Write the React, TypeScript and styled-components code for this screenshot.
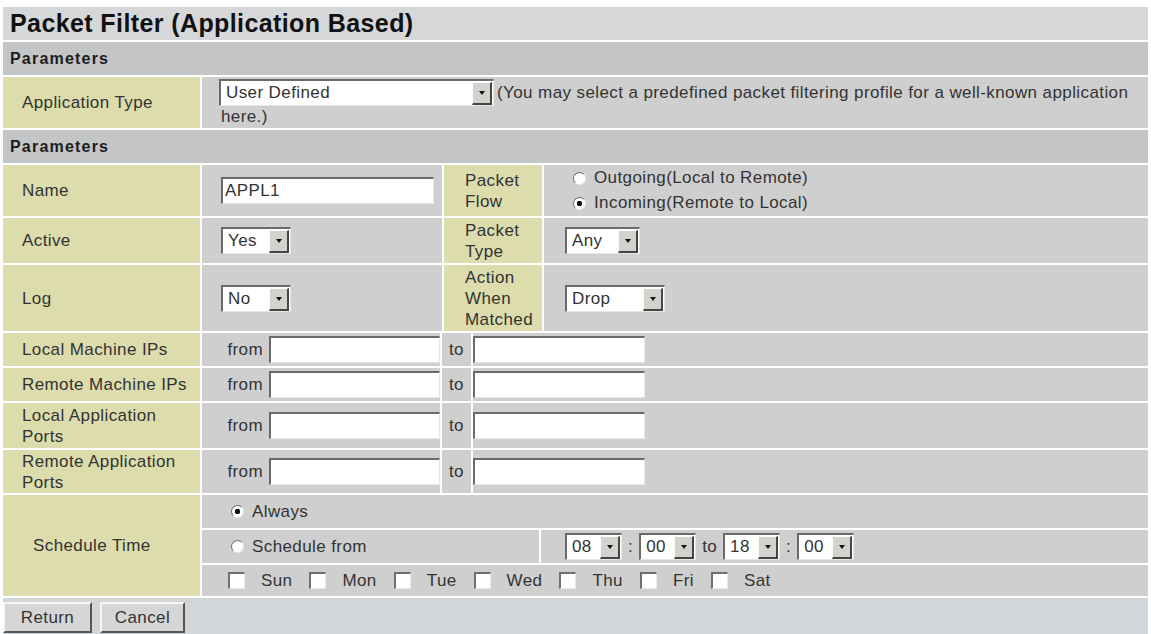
import styled, { createGlobalStyle } from "styled-components";

const GlobalStyle = createGlobalStyle`
    body {
        margin: 0;
        background: #ffffff;
        font-family: "Liberation Sans", Arial, sans-serif;
        color: #333333;
    }
`;

const Page = styled.div`
    width: 1145px;
    padding: 7px 0 0 3px;
    display: flex;
    flex-direction: column;
    gap: 2px;
    font-size: 17px;
    letter-spacing: 0.4px;
`;

const Title = styled.h1`
    margin: 0;
    height: 33px;
    padding-left: 7px;
    display: flex;
    align-items: center;
    background: #d5d7d9;
    font-size: 25px;
    font-weight: bold;
    color: #111;
`;

const Section = styled.div`
    height: 33px;
    padding-left: 7px;
    display: flex;
    align-items: center;
    background: #c3c5c7;
    font-size: 16px;
    font-weight: bold;
    letter-spacing: 1.2px;
    color: #1c1c1c;
`;

// every block of rows is one grid, the white gaps are the cell borders
const Block = styled.div<{ $cols: string; $rows: string }>`
    display: grid;
    grid-template-columns: ${p => p.$cols};
    grid-template-rows: ${p => p.$rows};
    gap: 2px;
`;

const Label = styled.div<{ $pad?: number; $span?: number }>`
    background: #dcdcad;
    padding-left: ${p => p.$pad ?? 19}px;
    display: flex;
    align-items: center;
    line-height: 21px;
    ${p => p.$span ? `grid-row: span ${p.$span};` : ""}
`;

const Cell = styled.div<{ $pad?: number; $justify?: string; $wide?: number }>`
    background: #cfcfcf;
    padding-left: ${p => p.$pad ?? 19}px;
    display: flex;
    align-items: center;
    justify-content: ${p => p.$justify ?? "flex-start"};
    gap: 6px;
    ${p => p.$wide ? `grid-column: span ${p.$wide};` : ""}
`;

const WrapCell = styled.div`
    background: #cfcfcf;
    padding: 2px 10px 0 17px;
    display: flex;
    flex-wrap: wrap;
    align-items: center;
    align-content: flex-start;
    line-height: 22px;
`;

const Hint = styled.span`
    margin-left: 3px;
`;

const HintTail = styled.span`
    flex-basis: 100%;
    padding-left: 2px;
`;

const Stack = styled.div`
    display: flex;
    flex-direction: column;
    gap: 5px;
`;

const Choice = styled.label`
    display: flex;
    align-items: center;
    gap: 8px;
`;

const Radio = styled.span<{ $on?: boolean }>`
    width: 11px;
    height: 11px;
    border-radius: 50%;
    border: 1px solid;
    border-color: #6f6f6f #e8e8e8 #e8e8e8 #6f6f6f;
    background: ${p => p.$on
        ? "radial-gradient(circle, #111 0 2.5px, #fff 3px)"
        : "#fff"};
    flex-shrink: 0;
`;

const Check = styled.span`
    width: 14px;
    height: 14px;
    background: #fff;
    border-top: 2px solid #6f6f6f;
    border-left: 2px solid #6f6f6f;
    border-right: 1px solid #e8e8e8;
    border-bottom: 1px solid #e8e8e8;
    flex-shrink: 0;
`;

const Days = styled.div`
    display: flex;
    align-items: center;
    gap: 17px;
`;

const Day = styled.label`
    display: flex;
    align-items: center;
    gap: 16px;
`;

const Field = styled.div<{ $w: number }>`
    width: ${p => p.$w}px;
    height: 27px;
    box-sizing: border-box;
    background: #fff;
    border-top: 2px solid #6a6a6a;
    border-left: 2px solid #6a6a6a;
    border-right: 1px solid #e6e6e6;
    border-bottom: 1px solid #e6e6e6;
    padding-left: 2px;
    display: flex;
    align-items: center;
`;

const SelectBox = styled.span<{ $w: number }>`
    display: inline-flex;
    width: ${p => p.$w}px;
    height: 27px;
    box-sizing: border-box;
    background: #fff;
    border-top: 2px solid #6a6a6a;
    border-left: 2px solid #6a6a6a;
    border-right: 1px solid #e6e6e6;
    border-bottom: 1px solid #e6e6e6;
    line-height: normal;
    flex-shrink: 0;
`;

const SelectText = styled.span`
    flex: 1;
    padding-left: 5px;
    display: flex;
    align-items: center;
`;

const SelectBtn = styled.span`
    width: 17px;
    margin: 1px 1px 0 0;
    background: #d4d2cc;
    border-style: solid;
    border-width: 1px 2px 2px 1px;
    border-color: #fafafa #454545 #454545 #fafafa;
    display: flex;
    align-items: center;
    justify-content: center;
    &::after {
        content: "";
        border-left: 3px solid transparent;
        border-right: 3px solid transparent;
        border-top: 4px solid #111;
    }
`;

const Bar = styled.div`
    height: 36px;
    padding-top: 4px;
    box-sizing: border-box;
    background: #d3d6d8;
    display: flex;
    align-items: flex-start;
    gap: 8px;
`;

const Button = styled.button<{ $w: number }>`
    width: ${p => p.$w}px;
    height: 31px;
    background: #d6d6d6;
    border: 2px solid;
    border-color: #f6f6f6 #555 #555 #f6f6f6;
    font-family: "Liberation Sans", Arial, sans-serif;
    font-size: 17px;
    letter-spacing: 0.4px;
    color: #333;
    padding: 0;
`;

function Select({ w, value }: { w: number; value: string }) {
    return <SelectBox $w={w}>
        <SelectText>{value}</SelectText>
        <SelectBtn />
    </SelectBox>
}

const ranges = [
    "Local Machine IPs",
    "Remote Machine IPs",
    "Local Application Ports",
    "Remote Application Ports",
];

const days = ["Sun", "Mon", "Tue", "Wed", "Thu", "Fri", "Sat"];

export default function App() {
    return <>
        <GlobalStyle />
        <Page>
            <Title>Packet Filter (Application Based)</Title>
            <Section>Parameters</Section>
            <Block $cols="197px 1fr" $rows="51px">
                <Label>Application Type</Label>
                <WrapCell>
                    <Select w={275} value="User Defined" />
                    <Hint>(You may select a predefined packet filtering profile for a well-known application</Hint>
                    <HintTail>here.)</HintTail>
                </WrapCell>
            </Block>
            <Section>Parameters</Section>
            <Block $cols="197px 240px 98px 1fr" $rows="51px 45px 66px">
                <Label>Name</Label>
                <Cell><Field $w={213}>APPL1</Field></Cell>
                <Label $pad={21}>Packet<br />Flow</Label>
                <Cell $pad={29}>
                    <Stack>
                        <Choice><Radio />Outgoing(Local to Remote)</Choice>
                        <Choice><Radio $on />Incoming(Remote to Local)</Choice>
                    </Stack>
                </Cell>
                <Label>Active</Label>
                <Cell><Select w={70} value="Yes" /></Cell>
                <Label $pad={21}>Packet<br />Type</Label>
                <Cell $pad={21}><Select w={75} value="Any" /></Cell>
                <Label>Log</Label>
                <Cell><Select w={70} value="No" /></Cell>
                <Label $pad={21}>Action<br />When<br />Matched</Label>
                <Cell $pad={21}><Select w={100} value="Drop" /></Cell>
            </Block>
            <Block $cols="197px 238px 29px 1fr" $rows="33px 33px 45px 43px">
                {ranges.map(r => <Row key={r} label={r} />)}
            </Block>
            <Block $cols="197px 337px 1fr" $rows="33px 33px 31px">
                <Label $pad={30} $span={3}>Schedule Time</Label>
                <Cell $pad={29} $wide={2}><Choice><Radio $on />Always</Choice></Cell>
                <Cell $pad={29}><Choice><Radio />Schedule from</Choice></Cell>
                <Cell $pad={24}>
                    <Select w={57} value="08" />:
                    <Select w={57} value="00" />
                    <span>to</span>
                    <Select w={57} value="18" />:
                    <Select w={57} value="00" />
                </Cell>
                <Cell $pad={26} $wide={2}>
                    <Days>
                        {days.map(d => <Day key={d}><Check />{d}</Day>)}
                    </Days>
                </Cell>
            </Block>
            <Bar>
                <Button $w={89}>Return</Button>
                <Button $w={85}>Cancel</Button>
            </Bar>
        </Page>
    </>
}

function Row({ label }: { label: string }) {
    return <>
        <Label>{label}</Label>
        <Cell $pad={0} $justify="flex-end">
            <span>from</span>
            <Field $w={171} />
        </Cell>
        <Cell $pad={0} $justify="center">to</Cell>
        <Cell $pad={0}><Field $w={172} /></Cell>
    </>
}
